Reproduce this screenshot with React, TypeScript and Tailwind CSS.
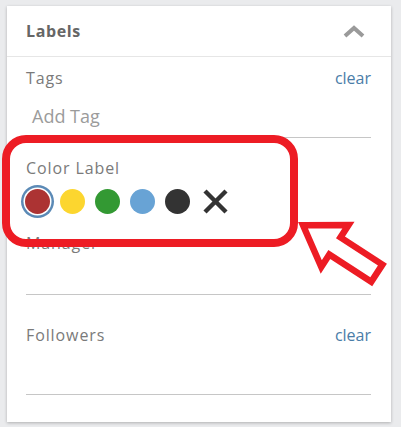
import React from 'react';

const swatches = ['#fcd62f', '#339933', '#68a3d5', '#333333'];

function Chevron() {
  return (
    <svg width="22" height="14" viewBox="0 0 22 14">
      <polyline points="2,12 11,4 20,12" fill="none" stroke="#9a9a9a" strokeWidth="4" strokeLinejoin="miter" />
    </svg>
  );
}

function FieldLabel({ text, clear }: { text: string; clear?: boolean }) {
  return (
    <div className="flex items-center justify-between leading-[20px]">
      <span className="text-[16px] tracking-[0.9px] text-[#7a7a7a]">{text}</span>
      {clear && <span className="text-[16px] text-[#4a7da8]">clear</span>}
    </div>
  );
}

export default function App() {
  return (
    <div className="relative min-h-screen bg-[#eaebed] pt-[6px] pl-[7px] font-['Open_Sans',sans-serif]">
      <div className="w-[384px] bg-white shadow-[0_1px_3px_rgba(0,0,0,0.25)] pb-[27px]">
        {/* Header */}
        <div className="h-[51px] flex items-center justify-between pl-[19px] pr-[26px] border-b border-[#e6e6e6]">
          <span className="text-[16px] font-bold tracking-[0.6px] text-[#666]">Labels</span>
          <Chevron />
        </div>

        <div className="pl-[19px] pr-[20px]">
          {/* Tags */}
          <div className="mt-[11px]">
            <FieldLabel text="Tags" clear />
          </div>
          <div className="h-[50px] pt-[16px] pl-[6px] border-b border-[#c6c6c6] leading-[24px] text-[18px] text-[#9b9b9b]">
            Add Tag
          </div>

          {/* Color label */}
          <div className="mt-[20px]">
            <FieldLabel text="Color Label" />
          </div>
          <div className="mt-[8px] h-[31px] flex items-center gap-[10px] -ml-[1px]">
            <span className="w-[25px] h-[25px] rounded-full bg-[#ac3333] shadow-[0_0_0_1.5px_#fff,0_0_0_4px_#5b8ab6]" />
            {swatches.map((c) => (
              <span key={c} className="w-[25px] h-[25px] rounded-full" style={{ backgroundColor: c }} />
            ))}
            <svg width="25" height="25" viewBox="0 0 25 25" className="ml-[3px]">
              <line x1="2" y1="2" x2="23" y2="23" stroke="#333" strokeWidth="4.5" />
              <line x1="23" y1="2" x2="2" y2="23" stroke="#333" strokeWidth="4.5" />
            </svg>
          </div>

          {/* Manager */}
          <div className="mt-[16px]">
            <FieldLabel text="Manager" />
          </div>
          <div className="h-[42px] border-b border-[#c6c6c6]" />

          {/* Followers */}
          <div className="mt-[30px]">
            <FieldLabel text="Followers" clear />
          </div>
          <div className="h-[50px] border-b border-[#c6c6c6]" />
        </div>
      </div>

      {/* Annotation box */}
      <div className="absolute left-[2px] top-[135px] w-[296px] h-[112px] border-[8.5px] border-[#ed1c24] rounded-[24px] pointer-events-none" />

      {/* Annotation arrow */}
      <svg className="absolute left-0 top-0 pointer-events-none" width="401" height="427" viewBox="0 0 401 427">
        <g transform="translate(298 222) rotate(33)">
          <polygon
            points="6,0 44,-25 44,-10.25 94,-10.25 94,10.25 44,10.25 44,25"
            fill="#fff"
            stroke="#ed1c24"
            strokeWidth="6.5"
            strokeLinejoin="miter"
          />
        </g>
      </svg>
    </div>
  );
}
